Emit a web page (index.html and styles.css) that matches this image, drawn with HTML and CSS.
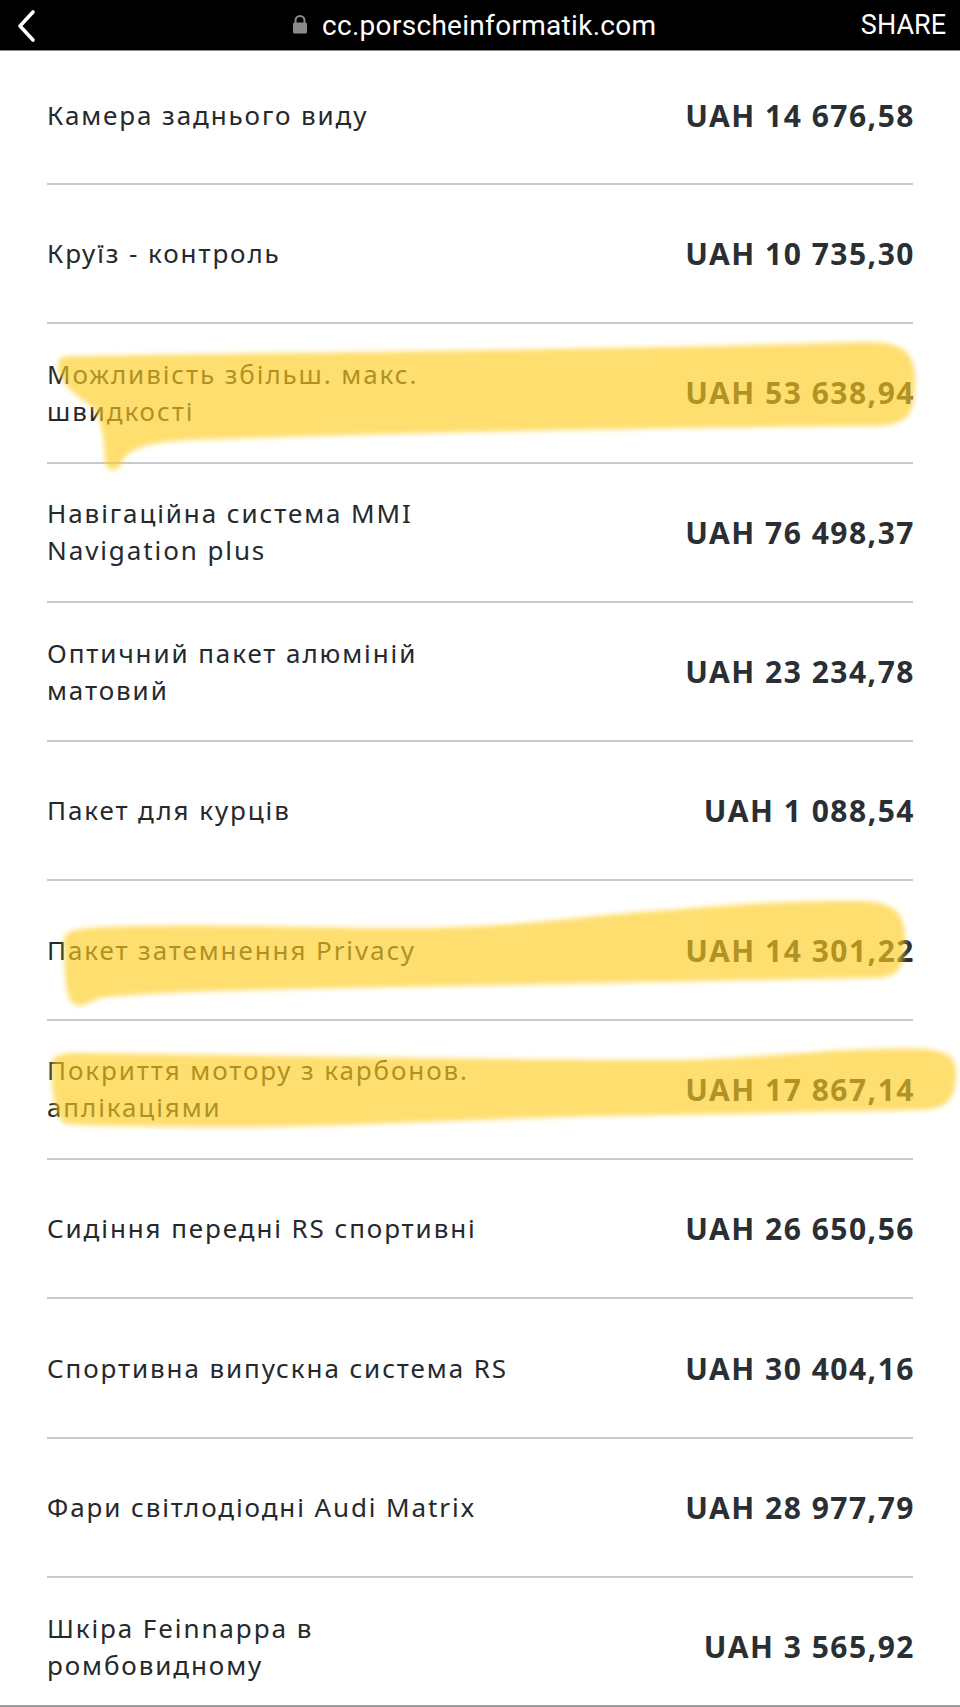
FILE: index.html
```html
<!DOCTYPE html>
<html lang="uk">
<head>
<meta charset="utf-8">
<title>cc.porscheinformatik.com</title>
<link rel="stylesheet" href="styles.css">
</head>
<body>
<header class="topbar">
  <svg class="back" width="24" height="34" viewBox="0 0 24 34" aria-hidden="true">
    <path d="M18 3 L5 17 L18 31" fill="none" stroke="#fff" stroke-width="3.6" stroke-linecap="round" stroke-linejoin="round"/>
  </svg>
  <div class="address">
    <svg class="lock" width="16" height="20" viewBox="0 0 16 20" aria-hidden="true">
      <path d="M3.5 9 V6.5 A4.5 4.5 0 0 1 12.5 6.5 V9" fill="none" stroke="#8a8a8a" stroke-width="2"/>
      <rect x="1" y="8.5" width="14" height="11" rx="1.5" fill="#8a8a8a"/>
    </svg>
    <span class="url">cc.porscheinformatik.com</span>
  </div>
  <span class="share">SHARE</span>
</header>

<main class="list">
  <div class="row first"><span class="label">Камера заднього виду</span><span class="price">UAH 14 676,58</span></div>
  <div class="row"><span class="label">Круїз - контроль</span><span class="price">UAH 10 735,30</span></div>
  <div class="row"><span class="label">Можливість збільш. макс.<br>швидкості</span><span class="price">UAH 53 638,94</span></div>
  <div class="row"><span class="label">Навігаційна система MMI<br>Navigation plus</span><span class="price">UAH 76 498,37</span></div>
  <div class="row"><span class="label">Оптичний пакет алюміній<br>матовий</span><span class="price">UAH 23 234,78</span></div>
  <div class="row"><span class="label">Пакет для курців</span><span class="price">UAH 1 088,54</span></div>
  <div class="row"><span class="label">Пакет затемнення Privacy</span><span class="price">UAH 14 301,22</span></div>
  <div class="row"><span class="label">Покриття мотору з карбонов.<br>аплікаціями</span><span class="price">UAH 17 867,14</span></div>
  <div class="row"><span class="label">Сидіння передні RS спортивні</span><span class="price">UAH 26 650,56</span></div>
  <div class="row"><span class="label">Спортивна випускна система RS</span><span class="price">UAH 30 404,16</span></div>
  <div class="row"><span class="label">Фари світлодіодні Audi Matrix</span><span class="price">UAH 28 977,79</span></div>
  <div class="row"><span class="label">Шкіра Feinnappa в<br>ромбовидному</span><span class="price">UAH 3 565,92</span></div>
</main>

<svg class="marker" width="960" height="1707" viewBox="0 0 960 1707" aria-hidden="true">
  <defs>
    <filter id="soft" x="-5%" y="-20%" width="110%" height="140%">
      <feGaussianBlur stdDeviation="2.5"/>
    </filter>
  </defs>
  <g fill="#fdcb1c" fill-opacity="0.64" filter="url(#soft)">
    <path d="M58 368 C57 356 64 356 80 356 C330 352 610 350 860 342 C905 341 916 352 915 385 C914 420 905 427 860 426 C650 428 420 432 190 440 C150 442 128 448 122 462 C118 472 108 474 105 462 C104 445 104 428 95 410 C80 395 62 390 58 368 Z"/>
    <path d="M64 945 C62 932 70 930 90 928 C190 922 330 929 430 928 C520 926 570 918 640 912 C720 906 780 900 860 901 C898 902 906 915 905 945 C904 972 895 978 870 978 C700 981 520 985 300 989 C200 991 130 994 100 998 C86 1004 76 1010 70 1000 C64 985 65 965 64 945 Z"/>
    <path d="M52 1070 C50 1056 58 1053 78 1053 C260 1055 480 1060 674 1060 C760 1058 820 1050 880 1049 C940 1047 957 1050 956 1075 C955 1103 945 1110 915 1110 C800 1112 700 1115 600 1116 C450 1120 350 1126 250 1127 C150 1127 90 1126 66 1124 C54 1118 52 1092 52 1070 Z"/>
  </g>
</svg>
</body>
</html>
```

FILE: styles.css
```css
html, body {
  margin: 0;
  padding: 0;
  background: #ffffff;
}

body {
  position: relative;
  height: 1707px;
  overflow: hidden;
  font-family: "Noto Sans", "DejaVu Sans", sans-serif;
  color: #25292d;
}

.topbar {
  height: 50px;
  background: #000000;
  border-bottom: 1px solid #8d8d8d;
  display: flex;
  align-items: center;
  justify-content: space-between;
  padding: 0 14px 0 15px;
  font-family: Roboto, "Liberation Sans", sans-serif;
  color: #ffffff;
}

.back {
  display: block;
  margin-top: 1px;
}

.address {
  display: flex;
  align-items: center;
  gap: 14px;
  margin-left: 253px;
  margin-right: auto;
}

.lock {
  display: block;
  margin-top: -2px;
}

.url {
  font-size: 28px;
  letter-spacing: 0.3px;
}

.share {
  font-size: 27px;
}

.list {
  margin: 0 47px;
}

.row {
  box-sizing: border-box;
  height: 139.3px;
  border-bottom: 2px solid #c7cbd0;
  display: flex;
  align-items: center;
  justify-content: space-between;
  gap: 20px;
}

.row.first {
  height: 134px;
  padding-bottom: 4px;
}

.label {
  font-size: 26px;
  line-height: 37px;
  letter-spacing: 1.9px;
  color: #25292d;
}

.price {
  font-size: 30px;
  font-weight: 700;
  letter-spacing: 1.5px;
  color: #2a2f34;
  white-space: nowrap;
  margin-right: -2px;
}

.marker {
  position: absolute;
  top: 0;
  left: 0;
  pointer-events: none;
}

body::after {
  content: "";
  position: fixed;
  left: 0;
  right: 0;
  bottom: 0;
  height: 2px;
  background: #9a9a9a;
}
```
